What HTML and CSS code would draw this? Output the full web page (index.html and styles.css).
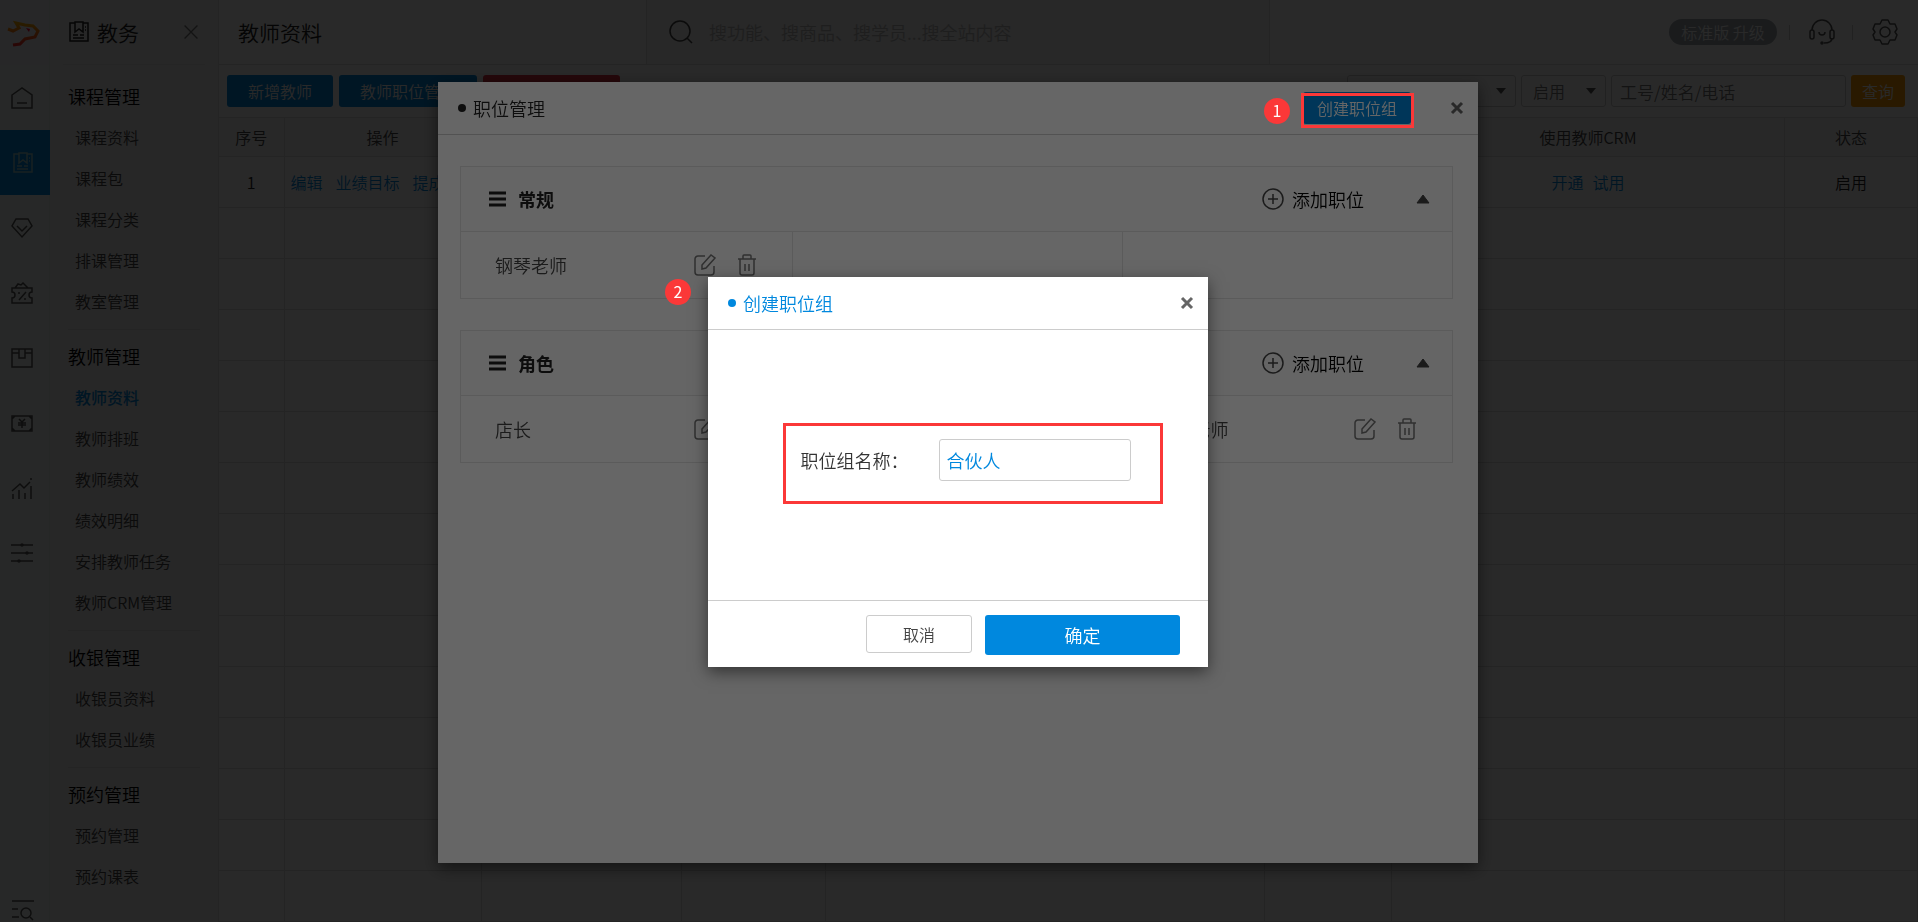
FILE: index.html
```html
<!DOCTYPE html>
<html lang="zh-CN">
<head>
<meta charset="utf-8">
<title>教师资料</title>
<link rel="stylesheet" href="styles.css">
</head>
<body>
<svg class="defs" aria-hidden="true">
  <symbol id="i-book" viewBox="0 0 22 22"><path d="M7 2H2v18h18V2h-5M7 1v10l4-3 4 3V1zM17 6h1M17 9h1M5 14h5M12 14h4M5 17h11"/></symbol>
  <symbol id="i-edit" viewBox="0 0 22 22"><path d="M11 2H4a3 3 0 0 0-3 3v13a3 3 0 0 0 3 3h13a3 3 0 0 0 3-3v-6M8 11l9-10 4 3-9 10-4 1z"/></symbol>
  <symbol id="i-trash" viewBox="0 0 22 22"><path d="M2 5h18M7 5V2q0-1 1-1h6q1 0 1 1v3M4 5v14q0 2 2 2h10q2 0 2-2V5M9 10v7M13 10v7"/></symbol>
  <symbol id="i-plus" viewBox="0 0 24 24"><circle cx="12" cy="12" r="10"/><path d="M12 7v10M7 12h10"/></symbol>
  <symbol id="i-close" viewBox="0 0 14 14"><path d="M2 2l10 10M12 2L2 12"/></symbol>
  <symbol id="i-menu" viewBox="0 0 18 16"><path d="M0 2h17M0 8h17M0 14h17"/></symbol>
</svg>

<div class="app">
  <nav class="rail" aria-label="主导航">
    <a class="rail-logo" href="#" aria-label="首页">
      <svg viewBox="0 0 50 64" width="50" height="64">
        <defs><linearGradient id="lg" x1="0" y1="0" x2="0" y2="1"><stop offset="0" stop-color="#ffb000"/><stop offset="1" stop-color="#ff2a2a"/></linearGradient></defs>
        <path d="M8 29l5 2 6-3-3-5 9 2 8 1 5 5-3 6-10 2-5 5-7 1" fill="none" stroke="url(#lg)" stroke-width="3"/>
        <path d="M26 28l4 1-1 3z" fill="#f03"/>
      </svg>
    </a>
    <a class="rail-item" href="#" aria-label="工作台"><svg viewBox="0 0 22 22"><path d="M1 8l10-7 10 7v13H1zM6 16h10"/></svg></a>
    <a class="rail-item rail-item-on" href="#" aria-label="教务"><svg><use href="#i-book"/></svg></a>
    <a class="rail-item" href="#" aria-label="会员"><svg viewBox="0 0 22 22"><path d="M5 2h12l4 7-10 11L1 9zM6 9l5 5 5-5"/></svg></a>
    <a class="rail-item" href="#" aria-label="营销"><svg viewBox="0 0 22 22"><path d="M1 6h20v4a3 3 0 0 0 0 6v5H1v-5a3 3 0 0 0 0-6zM4 6l3-4 3 1 2-2 5 5M15 10l-7 8M8 10v2M14 16v2"/></svg></a>
    <a class="rail-item" href="#" aria-label="商品"><svg viewBox="0 0 22 22"><path d="M1 2h20v18H1zM1 6h7M14 6h7M8 2v9h6V2"/></svg></a>
    <a class="rail-item" href="#" aria-label="财务"><svg viewBox="0 0 22 22"><path d="M1 4h20v15H1zM1 7l3-3M21 7l-3-3M1 16l3 3M21 16l-3 3M8 7l3 3 3-3M7 11h8M7 13h8M11 10v6"/></svg></a>
    <a class="rail-item" href="#" aria-label="报表"><svg viewBox="0 0 22 22"><path d="M1 14l8-7 4 4 6-6M2 17v5M8 13v9M14 16v6M20 9v13M19 2h2"/></svg></a>
    <a class="rail-item" href="#" aria-label="设置"><svg viewBox="0 0 22 22"><path d="M0 3h22M0 11h22M0 19h22"/><circle cx="11" cy="3" r="1"/><circle cx="16" cy="11" r="1"/><circle cx="8" cy="19" r="1"/></svg></a>
    <a class="rail-foot" href="#" aria-label="查找功能"><svg viewBox="0 0 22 22"><path d="M0 2h22M0 10h6M0 18h7M18 18l3 3"/><circle cx="14" cy="14" r="5"/></svg></a>
  </nav>

  <aside class="side">
    <header class="side-head">
      <svg class="side-icon"><use href="#i-book"/></svg>
      <span>教务</span>
      <button class="side-close" type="button" aria-label="收起"><svg><use href="#i-close"/></svg></button>
    </header>
    <section class="group">
      <h2>课程管理</h2>
      <a href="#">课程资料</a><a href="#">课程包</a><a href="#">课程分类</a><a href="#">排课管理</a><a href="#">教室管理</a>
    </section>
    <section class="group">
      <h2>教师管理</h2>
      <a class="on" href="#">教师资料</a><a href="#">教师排班</a><a href="#">教师绩效</a><a href="#">绩效明细</a><a href="#">安排教师任务</a><a href="#">教师CRM管理</a>
    </section>
    <section class="group">
      <h2>收银管理</h2>
      <a href="#">收银员资料</a><a href="#">收银员业绩</a>
    </section>
    <section class="group">
      <h2>预约管理</h2>
      <a href="#">预约管理</a><a href="#">预约课表</a>
    </section>
  </aside>

  <main class="main">
    <header class="top">
      <h1>教师资料</h1>
      <label class="search">
        <svg viewBox="0 0 24 24"><circle cx="11" cy="11" r="10"/><path d="M18 18l5 5"/></svg>
        <input type="text" aria-label="全站搜索" placeholder="搜功能、搜商品、搜学员...搜全站内容">
      </label>
      <div class="tools">
        <button class="pill" type="button">标准版 升级</button>
        <i class="sep"></i>
        <button class="tool" type="button" aria-label="客服"><svg viewBox="0 0 26 26"><path d="M3 11a10 10 0 0 1 20 0M10 13q0 3 3 3t3-3M23 19q0 5-8 5"/><rect x="1" y="11" width="4" height="9" rx="2"/><rect x="21" y="11" width="4" height="9" rx="2"/><circle cx="13" cy="24" r="1"/></svg></button>
        <i class="sep"></i>
        <button class="tool" type="button" aria-label="设置"><svg viewBox="0 0 26 26"><path d="M10 1h6l2 4 5 0 2 5-2 3 2 3-2 5-5 0-2 4h-6l-2-4-5 0-2-5 2-3-2-3 2-5 5 0z" stroke-linejoin="round"/><circle cx="13" cy="13" r="5"/></svg></button>
      </div>
    </header>

    <div class="bar">
      <button class="btn btn-blue" type="button">新增教师</button>
      <button class="btn btn-blue" type="button">教师职位管理</button>
      <button class="btn btn-red" type="button" aria-hidden="true"></button>
      <div class="filters">
        <span class="pick pick-wide"><select aria-label="部门"><option></option></select></span>
        <span class="pick"><select aria-label="状态"><option>启用</option></select></span>
        <input class="keyword" type="text" aria-label="关键字" placeholder="工号/姓名/电话">
        <button class="btn btn-orange" type="button">查询</button>
      </div>
    </div>

    <table class="grid">
      <colgroup><col class="c1"><col class="c2"><col class="c3"><col class="c4"><col><col class="c6"><col class="c7"><col class="c8"></colgroup>
      <thead><tr><th>序号</th><th>操作</th><th></th><th></th><th></th><th></th><th>使用教师CRM</th><th>状态</th></tr></thead>
      <tbody>
        <tr><td>1</td><td class="acts"><div><a href="#">编辑</a><a href="#">业绩目标</a><a href="#">提成</a></div></td><td></td><td></td><td></td><td></td><td class="crm"><div><a href="#">开通</a><a href="#">试用</a></div></td><td>启用</td></tr>
        <tr><td></td><td></td><td></td><td></td><td></td><td></td><td></td><td></td></tr>
        <tr><td></td><td></td><td></td><td></td><td></td><td></td><td></td><td></td></tr>
        <tr><td></td><td></td><td></td><td></td><td></td><td></td><td></td><td></td></tr>
        <tr><td></td><td></td><td></td><td></td><td></td><td></td><td></td><td></td></tr>
        <tr><td></td><td></td><td></td><td></td><td></td><td></td><td></td><td></td></tr>
        <tr><td></td><td></td><td></td><td></td><td></td><td></td><td></td><td></td></tr>
        <tr><td></td><td></td><td></td><td></td><td></td><td></td><td></td><td></td></tr>
        <tr><td></td><td></td><td></td><td></td><td></td><td></td><td></td><td></td></tr>
        <tr><td></td><td></td><td></td><td></td><td></td><td></td><td></td><td></td></tr>
        <tr><td></td><td></td><td></td><td></td><td></td><td></td><td></td><td></td></tr>
        <tr><td></td><td></td><td></td><td></td><td></td><td></td><td></td><td></td></tr>
        <tr><td></td><td></td><td></td><td></td><td></td><td></td><td></td><td></td></tr>
        <tr><td></td><td></td><td></td><td></td><td></td><td></td><td></td><td></td></tr>
        <tr><td></td><td></td><td></td><td></td><td></td><td></td><td></td><td></td></tr>
      </tbody>
    </table>
  </main>
</div>

<div class="overlay">
  <section class="modal modal-lg" role="dialog" aria-label="职位管理">
    <header class="modal-head">
      <h2>职位管理</h2>
      <button class="btn btn-blue" type="button">创建职位组</button>
      <button class="modal-x" type="button" aria-label="关闭"><svg><use href="#i-close"/></svg></button>
    </header>
    <div class="cards">
      <article class="card">
        <header class="card-head">
          <svg class="grip"><use href="#i-menu"/></svg>
          <h3>常规</h3>
          <button class="add" type="button"><svg><use href="#i-plus"/></svg>添加职位</button>
          <button class="fold" type="button" aria-label="收起"><svg viewBox="0 0 14 10"><path d="M7 1l6 8H1z"/></svg></button>
        </header>
        <div class="card-row">
          <div class="cell"><span>钢琴老师</span><button type="button" aria-label="编辑"><svg><use href="#i-edit"/></svg></button><button type="button" aria-label="删除"><svg><use href="#i-trash"/></svg></button></div>
          <div class="cell"></div>
          <div class="cell"></div>
        </div>
      </article>
      <article class="card">
        <header class="card-head">
          <svg class="grip"><use href="#i-menu"/></svg>
          <h3>角色</h3>
          <button class="add" type="button"><svg><use href="#i-plus"/></svg>添加职位</button>
          <button class="fold" type="button" aria-label="收起"><svg viewBox="0 0 14 10"><path d="M7 1l6 8H1z"/></svg></button>
        </header>
        <div class="card-row">
          <div class="cell"><span>店长</span><button type="button" aria-label="编辑"><svg><use href="#i-edit"/></svg></button><button type="button" aria-label="删除"><svg><use href="#i-trash"/></svg></button></div>
          <div class="cell"></div>
          <div class="cell"><span>钢琴老师</span><button type="button" aria-label="编辑"><svg><use href="#i-edit"/></svg></button><button type="button" aria-label="删除"><svg><use href="#i-trash"/></svg></button></div>
        </div>
      </article>
    </div>
  </section>
</div>

<div class="overlay overlay-top">
  <form class="modal modal-sm" role="dialog" aria-label="创建职位组">
    <header class="modal-head">
      <h2>创建职位组</h2>
      <button class="modal-x" type="button" aria-label="关闭"><svg><use href="#i-close"/></svg></button>
    </header>
    <div class="modal-body">
      <div class="field">
        <label for="gname">职位组名称：</label>
        <input id="gname" type="text" value="合伙人">
      </div>
    </div>
    <footer class="modal-foot">
      <button class="cancel" type="button">取消</button>
      <button class="ok" type="submit">确定</button>
    </footer>
    <span class="badge badge-2">2</span>
    <span class="badge badge-1">1</span>
    <span class="frame"></span>
  </form>
</div>
</body>
</html>
```

FILE: styles.css
```css
*, *::before, *::after { box-sizing: border-box; }
body {
  margin: 0;
  height: 100vh;
  overflow: hidden;
  font: 350 16px/24px "Noto Sans CJK SC", "Liberation Sans", sans-serif;
  color: #222;
  background: #fff;
}
h1, h2, h3 { margin: 0; font-weight: 350; }
a { color: inherit; text-decoration: none; }
button, input, select { font: inherit; color: inherit; border: 0; padding: 0; margin: 0; background: none; }
input, select { outline: 0; min-width: 0; }
svg { display: block; fill: none; stroke: currentColor; stroke-width: 1.5; }
.defs { position: absolute; width: 0; height: 0; }

.app { display: flex; height: 100vh; overflow: hidden; }

/* icon rail */
.rail { display: flex; flex-direction: column; width: 50px; flex: none; background: #f3f9f6; border-right: 1px solid #e2efec; color: #555; }
.rail-logo { height: 65px; background: #eff1f6; }
.rail-logo svg { stroke: none; }
.rail-item { display: flex; align-items: center; justify-content: center; height: 65px; padding-right: 5px; }
.rail-item svg, .rail-foot svg { width: 22px; height: 22px; }
.rail-item-on { background: #0088de; color: #9cc; margin-right: -1px; }
.rail-foot { margin-top: auto; padding: 0 0 1px 12px; }

/* section menu */
.side { width: 169px; flex: none; background: #eee; border-right: 1px solid #dcdcdc; color: #444; overflow: hidden; }
.side-head { display: flex; align-items: center; gap: 7px; height: 65px; margin: 0 13px 11px 13px; padding: 0 5px; border-bottom: 1px solid #e4e4e4; font-size: 21px; color: #222; }
.side-icon { width: 22px; height: 22px; }
.side-close { margin-left: auto; color: #777; }
.side-close svg { width: 18px; height: 18px; stroke-width: 1; }
.group { margin: 0 18px 6px 18px; padding-bottom: 7px; border-bottom: 1px solid #dedede; }
.group:last-child { border: 0; }
.group h2, .group a { display: block; line-height: 41px; }
.group h2 { font-size: 18px; color: #000; }
.group a { padding-left: 7px; }
.group .on { color: #0088de; font-weight: 500; }

/* page */
.main { flex: 1; min-width: 0; }
.top { display: flex; align-items: center; height: 65px; border-bottom: 1px solid #dcdcdc; padding-right: 15px; }
.top h1 { width: 427px; padding-left: 19px; font-size: 21px; color: #222; }
.search { display: flex; align-items: center; gap: 16px; width: 624px; height: 64px; padding-left: 22px; border: 1px solid #dcdcdc; border-width: 0 1px; background: #f4f4f4; }
.search svg { width: 24px; height: 24px; color: #444; }
.search input { flex: 1; font-size: 18px; }
.search input::placeholder { color: #bbb; opacity: 1; }
.tools { display: flex; align-items: center; gap: 12px; margin-left: auto; }
.pill { height: 26px; width: 108px; border-radius: 13px; background: #a0a8b0; color: #fff; line-height: 24px; }
.sep { width: 1px; height: 15px; background: #ccc; margin: 0 2px 0 0; }
.tool { width: 36px; padding: 0 5px; color: #555; }
.tool svg { width: 26px; height: 26px; }

.bar { display: flex; align-items: center; gap: 6px; height: 52px; padding: 0 13px 0 8px; }
.btn { height: 32px; padding: 0 21px; border-radius: 3px; color: #fff; white-space: nowrap; line-height: 30px; }
.btn-blue { background: #0088de; }
.btn-red { background: #e03040; width: 137px; }
.btn-orange { background: #ff9a00; padding: 0 11px; }
.filters { display: flex; align-items: center; gap: 5px; margin-left: auto; }
.pick { position: relative; width: 85px; height: 32px; border: 1px solid #ccc; border-radius: 3px; color: #777; }
.pick-wide { width: 169px; }
.pick select { appearance: none; width: 100%; height: 30px; padding-left: 11px; }
.pick::after { content: ""; position: absolute; right: 9px; top: 12px; border: 5px solid transparent; border-top: 6px solid #555; border-bottom: 0; }
.keyword { width: 235px; height: 32px; padding: 0 8px; border: 1px solid #ccc; border-radius: 3px; font-size: 17px; }
.keyword::placeholder { color: #777; opacity: 1; }

.grid { width: 100%; table-layout: fixed; border-collapse: collapse; }
.grid th, .grid td { height: 51px; padding: 0; border: 1px solid #dcdcdc; border-left: 0; text-align: center; font-weight: 350; color: #222; }
.grid th { height: 39px; background: #f6f6f6; color: #444; }
.grid a { color: #0088de; }
.c1 { width: 65px; } .c2 { width: 197px; } .c3 { width: 200px; } .c4 { width: 144px; }
.c6 { width: 127px; } .c7 { width: 393px; } .c8 { width: 133px; }
.acts div { display: flex; gap: 13px; padding-left: 6px; }
.crm div { display: flex; justify-content: center; gap: 9px; }

/* dialogs */
.overlay { position: fixed; inset: 0; display: flex; justify-content: center; align-items: flex-start; padding: 82px 2px 0 0; background: rgba(0, 0, 0, .6); }
.overlay-top { padding-top: 277px; }
.modal { position: relative; background: #fff; box-shadow: 0 5px 15px rgba(0, 0, 0, .5); }
.modal-lg { width: 1040px; height: 781px; }
.modal-sm { width: 500px; }
.modal-head { display: flex; align-items: center; height: 53px; padding: 0 14px 0 20px; border-bottom: 1px solid #ccc; }
.modal-head h2 { display: flex; align-items: center; gap: 7px; margin-right: auto; font-size: 18px; }
.modal-head h2::before { content: ""; width: 8px; height: 8px; border-radius: 50%; background: currentColor; }
.modal-head .btn { padding: 0 14px; }
.modal-sm h2 { color: #0088de; }
.modal-x { color: #666; margin-left: 39px; }
.modal-x svg { width: 14px; height: 14px; stroke-width: 3; }

.cards { display: grid; gap: 31px; padding: 31px 25px 0 22px; }
.card { border: 1px solid #e4e4e4; }
.card-head { display: flex; align-items: center; height: 65px; padding: 0 22px 0 28px; background: #fcfcfc; border-bottom: 1px solid #e4e4e4; }
.grip { width: 18px; height: 16px; stroke-width: 3; margin-right: 11px; }
.card-head h3 { font-size: 18px; font-weight: 700; }
.add { display: flex; align-items: center; gap: 7px; margin-left: auto; font-size: 18px; color: #000; }
.add svg { width: 24px; height: 24px; color: #444; }
.fold { margin-left: 52px; color: #444; }
.fold svg { width: 14px; height: 10px; fill: currentColor; stroke-width: 1; }
.card-row { display: grid; grid-template-columns: 332px 1fr 1fr; }
.cell { display: flex; align-items: center; gap: 20px; height: 66px; padding: 0 34px; border-right: 1px solid #e4e4e4; color: #444; font-size: 18px; }
.cell:last-child { border: 0; }
.cell span { margin-right: auto; }
.cell svg { width: 22px; height: 22px; color: #777; }

.modal-body { position: relative; display: flex; justify-content: center; align-items: center; height: 270px; padding-bottom: 10px; }
.field { display: flex; align-items: center; gap: 30px; font-size: 18px; color: #333; padding-left: 15px; }
.field input { width: 192px; height: 42px; padding: 0 7px; border: 1px solid #ccc; border-radius: 3px; color: #0088de; }
.modal-foot { display: flex; gap: 13px; justify-content: flex-end; align-items: flex-start; height: 67px; padding: 14px 28px 0; border-top: 1px solid #ccc; }
.cancel { width: 106px; height: 38px; border: 1px solid #ccc; border-radius: 3px; color: #444; line-height: 34px; }
.ok { width: 195px; height: 40px; border-radius: 3px; background: #0088de; color: #fff; font-size: 18px; line-height: 38px; }

/* step markers */
.badge { position: absolute; width: 26px; height: 26px; border-radius: 50%; background: #fb3838; color: #fff; text-align: center; font-weight: 400; }
.badge-2 { left: -43px; top: 2px; }
.badge-1 { left: 556px; top: -179px; }
.frame { position: absolute; left: 593px; top: -184px; width: 113px; height: 35px; border: 3px solid #fb3838; }
.modal-body::after { content: ""; position: absolute; left: 75px; top: 93px; width: 380px; height: 81px; border: 3px solid #fb3838; pointer-events: none; }
```
